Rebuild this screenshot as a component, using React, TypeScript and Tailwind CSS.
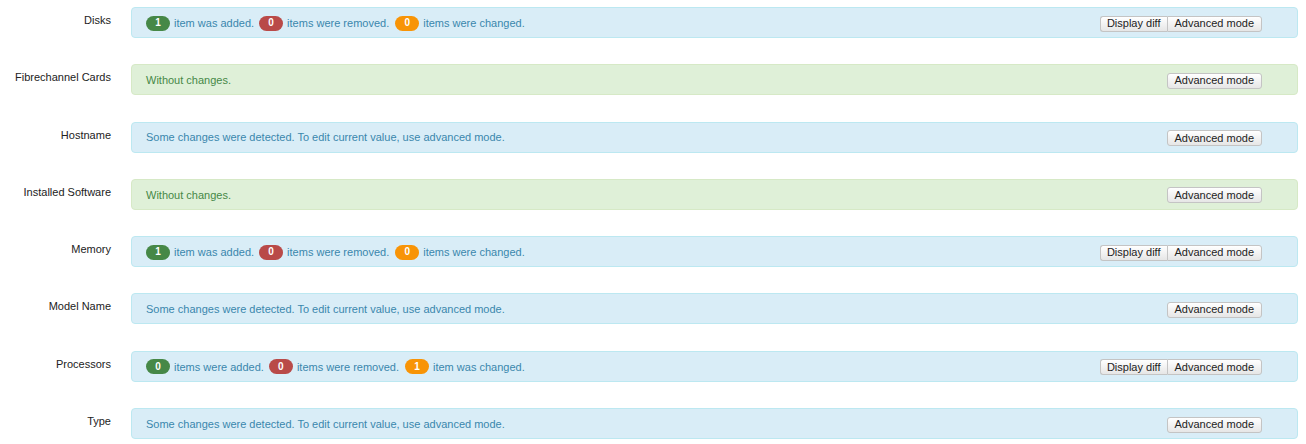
type Counts = { added: number; removed: number; changed: number };

type Row = {
  label: string;
  kind: 'counts' | 'none' | 'some';
  counts?: Counts;
};

const rows: Row[] = [
  { label: 'Disks', kind: 'counts', counts: { added: 1, removed: 0, changed: 0 } },
  { label: 'Fibrechannel Cards', kind: 'none' },
  { label: 'Hostname', kind: 'some' },
  { label: 'Installed Software', kind: 'none' },
  { label: 'Memory', kind: 'counts', counts: { added: 1, removed: 0, changed: 0 } },
  { label: 'Model Name', kind: 'some' },
  { label: 'Processors', kind: 'counts', counts: { added: 0, removed: 0, changed: 1 } },
  { label: 'Type', kind: 'some' },
];

const Badge = ({ n, color }: { n: number; color: string }) => (
  <span
    className={`inline-flex items-center justify-center h-[15px] min-w-[24px] px-[7px] rounded-full text-white text-[10px] font-bold leading-none ${color}`}
  >
    {n}
  </span>
);

const btn =
  'h-[16px] text-[11px] leading-none text-[#222] border border-[#c4c4c4] bg-gradient-to-b from-white to-[#e6e6e6] flex items-center';

const Counts = ({ c }: { c: Counts }) => (
  <div className="flex items-center">
    <Badge n={c.added} color="bg-[#468847]" />
    <span className="ml-[4px] mr-[5px]">
      {c.added === 1 ? 'item was added.' : 'items were added.'}
    </span>
    <Badge n={c.removed} color="bg-[#b94a48]" />
    <span className="ml-[4px] mr-[6px]">
      {c.removed === 1 ? 'item was removed.' : 'items were removed.'}
    </span>
    <Badge n={c.changed} color="bg-[#f89406]" />
    <span className="ml-[4px]">
      {c.changed === 1 ? 'item was changed.' : 'items were changed.'}
    </span>
  </div>
);

const App = () => {
  return (
    <div
      className="w-[1306px] h-[444px] bg-white pt-[7px] overflow-hidden"
      style={{ fontFamily: '"Liberation Sans", Arial, sans-serif' }}
    >
      {rows.map((r) => {
        const green = r.kind === 'none';
        return (
          <div key={r.label} className="flex items-start h-[57.3px]">
            <div className="w-[111px] shrink-0 text-right text-[11px] text-[#222] pt-[5px]">
              {r.label}
            </div>
            <div
              className={`ml-[20px] mr-[8px] flex-1 h-[31px] border rounded-[4px] pt-[1px] pl-[14px] pr-[35px] flex items-center justify-between text-[11px] ${
                green
                  ? 'bg-[#dff0d8] border-[#d6e9c6] text-[#468847]'
                  : 'bg-[#d9edf7] border-[#bce8f1] text-[#3a87ad]'
              }`}
            >
              {r.kind === 'counts' && r.counts && <Counts c={r.counts} />}
              {r.kind === 'none' && <span>Without changes.</span>}
              {r.kind === 'some' && (
                <span>Some changes were detected. To edit current value, use advanced mode.</span>
              )}
              <div className="flex mt-[1px]">
                {r.kind === 'counts' && (
                  <button className={`${btn} px-[6px] rounded-l-[3px] border-r-0`}>
                    Display diff
                  </button>
                )}
                <button
                  className={`${btn} px-[7px] ${
                    r.kind === 'counts' ? 'rounded-r-[3px]' : 'rounded-[3px]'
                  }`}
                >
                  Advanced mode
                </button>
              </div>
            </div>
          </div>
        );
      })}
    </div>
  );
};

export default App;
